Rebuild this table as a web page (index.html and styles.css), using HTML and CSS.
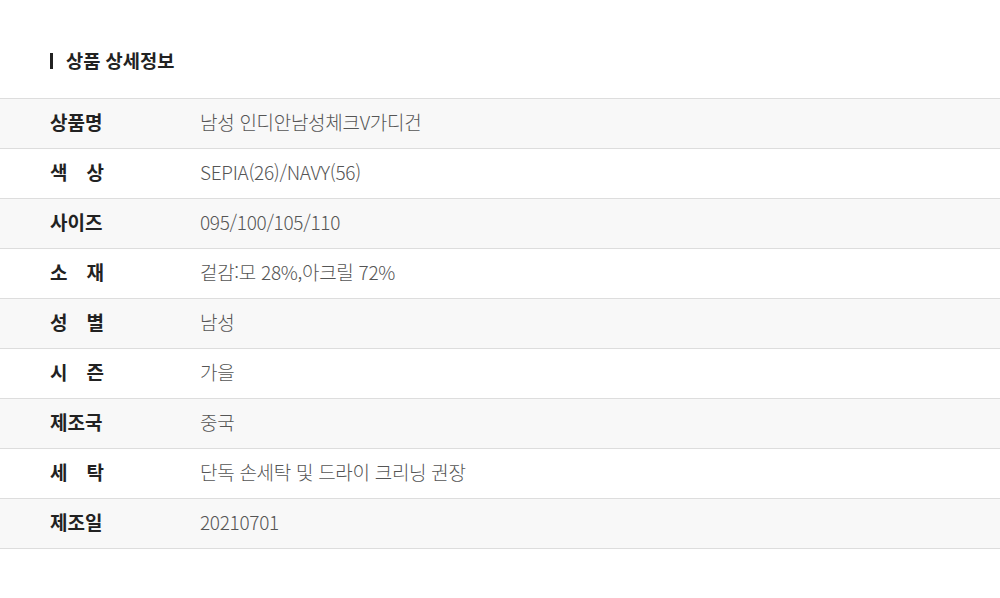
FILE: index.html
```html
<!DOCTYPE html>
<html lang="ko">
<head>
<meta charset="utf-8">
<link rel="stylesheet" href="styles.css">
</head>
<body>
<section class="detail">
  <h2 class="title">상품 상세정보</h2>
  <div class="table">
    <div class="row alt"><div class="label"><span class="lbl">상품명</span></div><div class="value">남성 인디안남성체크V가디건</div></div>
    <div class="row"><div class="label"><span class="lbl just">색 상</span></div><div class="value">SEPIA(26)/NAVY(56)</div></div>
    <div class="row alt"><div class="label"><span class="lbl">사이즈</span></div><div class="value">095/100/105/110</div></div>
    <div class="row"><div class="label"><span class="lbl just">소 재</span></div><div class="value">겉감:모 28%,아크릴 72%</div></div>
    <div class="row alt"><div class="label"><span class="lbl just">성 별</span></div><div class="value">남성</div></div>
    <div class="row"><div class="label"><span class="lbl just">시 즌</span></div><div class="value">가을</div></div>
    <div class="row alt"><div class="label"><span class="lbl">제조국</span></div><div class="value">중국</div></div>
    <div class="row"><div class="label"><span class="lbl just">세 탁</span></div><div class="value">단독 손세탁 및 드라이 크리닝 권장</div></div>
    <div class="row alt"><div class="label"><span class="lbl">제조일</span></div><div class="value">20210701</div></div>
  </div>
</section>
</body>
</html>
```
FILE: styles.css
```css
html, body {
  margin: 0;
  padding: 0;
  background: #fff;
}
body {
  font-family: "Noto Sans CJK KR", "Noto Sans", sans-serif;
  width: 1000px;
  height: 598px;
  overflow: hidden;
}
.detail {
  padding-top: 48px;
}
.title {
  margin: 0 0 26px 50px;
  display: flex;
  align-items: center;
  gap: 13px;
  height: 24px;
  font-size: 18.7px;
  font-weight: 700;
  color: #222;
  line-height: 24px;
}
.title::before {
  content: "";
  display: block;
  width: 3px;
  height: 16px;
  background: #222;
  margin-top: 1px;
}
.table {
  border-top: 1px solid #dddddd;
}
.row {
  display: flex;
  align-items: center;
  padding-bottom: 3px;
  box-sizing: border-box;
  height: 50px;
  border-bottom: 1px solid #dddddd;
  background: #fff;
}
.row.alt {
  background: #f8f8f8;
}
.label {
  width: 150px;
  padding-left: 50px;
  box-sizing: content-box;
  font-size: 19px;
  font-weight: 700;
  color: #222;
  line-height: 24px;
}
.lbl {
  display: inline-block;
  width: 54px;
}
.lbl.just {
  text-align: justify;
  text-align-last: justify;
}
.value {
  font-size: 19px;
  font-weight: 300;
  color: #555;
  line-height: 24px;
  letter-spacing: -0.3px;
}
```
